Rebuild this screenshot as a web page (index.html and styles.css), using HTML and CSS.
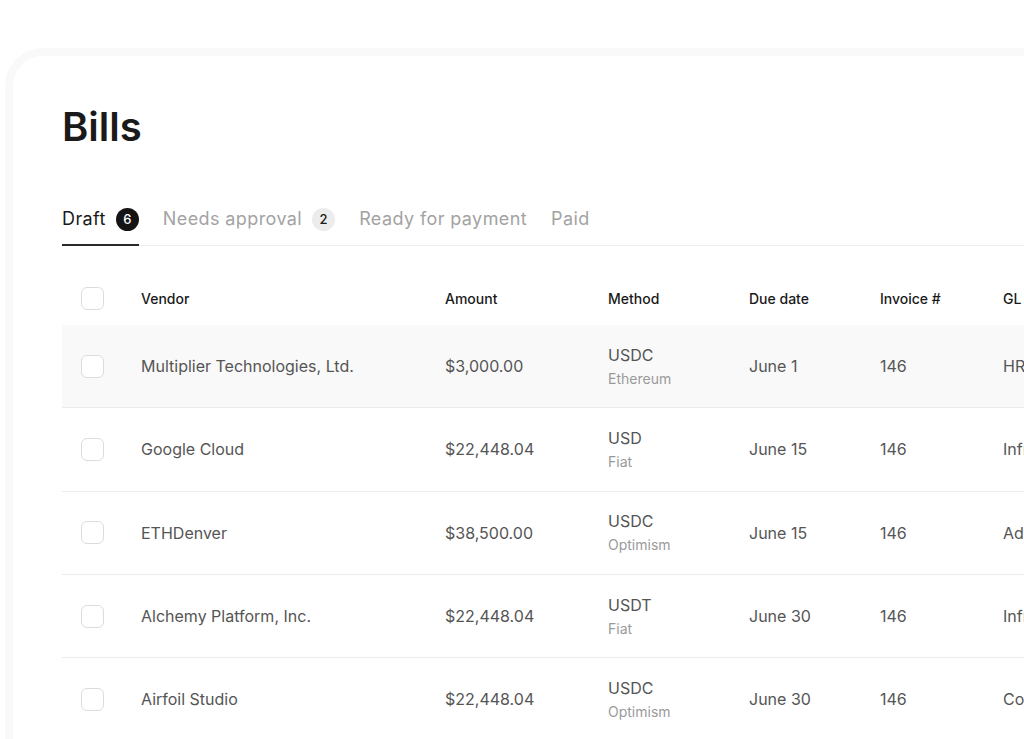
FILE: index.html
```html
<!DOCTYPE html>
<html lang="en">
<head>
<meta charset="utf-8">
<title>Bills</title>
<link rel="stylesheet" href="styles.css">
</head>
<body>
<div class="card">
  <h1 class="title">Bills</h1>
  <div class="tabs">
    <div class="tab active">Draft <span class="badge dark">6</span></div>
    <div class="tab">Needs approval <span class="badge light">2</span></div>
    <div class="tab">Ready for payment</div>
    <div class="tab">Paid</div>
  </div>
  <div class="table">
    <div class="row head">
      <div class="cell"><span class="check"></span></div>
      <div class="cell">Vendor</div>
      <div class="cell">Amount</div>
      <div class="cell">Method</div>
      <div class="cell">Due date</div>
      <div class="cell">Invoice #</div>
      <div class="cell">GL</div>
    </div>
    <div class="row hl">
      <div class="cell"><span class="check"></span></div>
      <div class="cell">Multiplier Technologies, Ltd.</div>
      <div class="cell">$3,000.00</div>
      <div class="cell stack"><span>USDC</span><span class="sub">Ethereum</span></div>
      <div class="cell">June 1</div>
      <div class="cell">146</div>
      <div class="cell">HR</div>
    </div>
    <div class="row">
      <div class="cell"><span class="check"></span></div>
      <div class="cell">Google Cloud</div>
      <div class="cell">$22,448.04</div>
      <div class="cell stack"><span>USD</span><span class="sub">Fiat</span></div>
      <div class="cell">June 15</div>
      <div class="cell">146</div>
      <div class="cell">Infrastructure</div>
    </div>
    <div class="row">
      <div class="cell"><span class="check"></span></div>
      <div class="cell">ETHDenver</div>
      <div class="cell">$38,500.00</div>
      <div class="cell stack"><span>USDC</span><span class="sub">Optimism</span></div>
      <div class="cell">June 15</div>
      <div class="cell">146</div>
      <div class="cell">Advertising</div>
    </div>
    <div class="row">
      <div class="cell"><span class="check"></span></div>
      <div class="cell">Alchemy Platform, Inc.</div>
      <div class="cell">$22,448.04</div>
      <div class="cell stack"><span>USDT</span><span class="sub">Fiat</span></div>
      <div class="cell">June 30</div>
      <div class="cell">146</div>
      <div class="cell">Infrastructure</div>
    </div>
    <div class="row">
      <div class="cell"><span class="check"></span></div>
      <div class="cell">Airfoil Studio</div>
      <div class="cell">$22,448.04</div>
      <div class="cell stack"><span>USDC</span><span class="sub">Optimism</span></div>
      <div class="cell">June 30</div>
      <div class="cell">146</div>
      <div class="cell">Contractors</div>
    </div>
  </div>
</div>
</body>
</html>
```
FILE: styles.css
```css
html, body {
  margin: 0;
  padding: 0;
  background: #ffffff;
  overflow: hidden;
  height: 739px;
}
body {
  font-family: Inter, "Noto Sans", "Liberation Sans", sans-serif;
  color: #1a1a1a;
}
.card {
  margin: 48px 0 0 5px;
  width: 1250px;
  height: 900px;
  box-sizing: border-box;
  border: 8px solid #f9f9f9;
  border-radius: 38px;
  padding: 47px 0 0 49px;
  background: #ffffff;
}
.title {
  margin: 0;
  font-size: 40px;
  line-height: 48px;
  font-weight: 600;
  letter-spacing: 0;
  color: #1a1a1a;
}
.tabs {
  margin-top: 56px;
  display: flex;
  gap: 24px;
  border-bottom: 1px solid #ececec;
}
.tab {
  display: flex;
  align-items: center;
  gap: 10px;
  font-size: 18px;
  line-height: 24px;
  letter-spacing: 0.4px;
  color: #a3a3a3;
  padding-bottom: 13px;
  margin-bottom: -1px;
  border-bottom: 2px solid transparent;
}
.tab.active {
  color: #1a1a1a;
  border-bottom-color: #2a2a2a;
}
.badge {
  width: 23px;
  height: 23px;
  border-radius: 50%;
  display: inline-flex;
  align-items: center;
  justify-content: center;
  font-size: 13px;
  font-weight: 500;
  letter-spacing: 0;
}
.badge.dark {
  background: #141414;
  color: #ffffff;
}
.badge.light {
  background: #ececec;
  color: #1a1a1a;
}
.table {
  margin-top: 26px;
}
.row {
  display: grid;
  grid-template-columns: 79px 304px 163px 141px 131px 123px 200px;
  align-items: center;
  height: 83.33px;
  box-sizing: border-box;
  border-bottom: 1px solid #ececec;
  font-size: 16px;
  color: #555555;
}
.row.head {
  height: 53px;
  border-bottom: none;
  font-size: 14px;
  font-weight: 500;
  color: #1a1a1a;
}
.row.hl {
  background: #f9f9f9;
}
.cell {
  white-space: nowrap;
  line-height: 20px;
}
.cell:first-child {
  padding-left: 19px;
  display: flex;
  align-items: center;
}
.check {
  width: 23px;
  height: 23px;
  box-sizing: border-box;
  border: 1px solid #dcdcdc;
  border-radius: 6px;
  background: #ffffff;
}
.stack {
  display: flex;
  flex-direction: column;
  gap: 5px;
}
.sub {
  font-size: 14px;
  line-height: 18px;
  color: #9a9a9a;
}
```
